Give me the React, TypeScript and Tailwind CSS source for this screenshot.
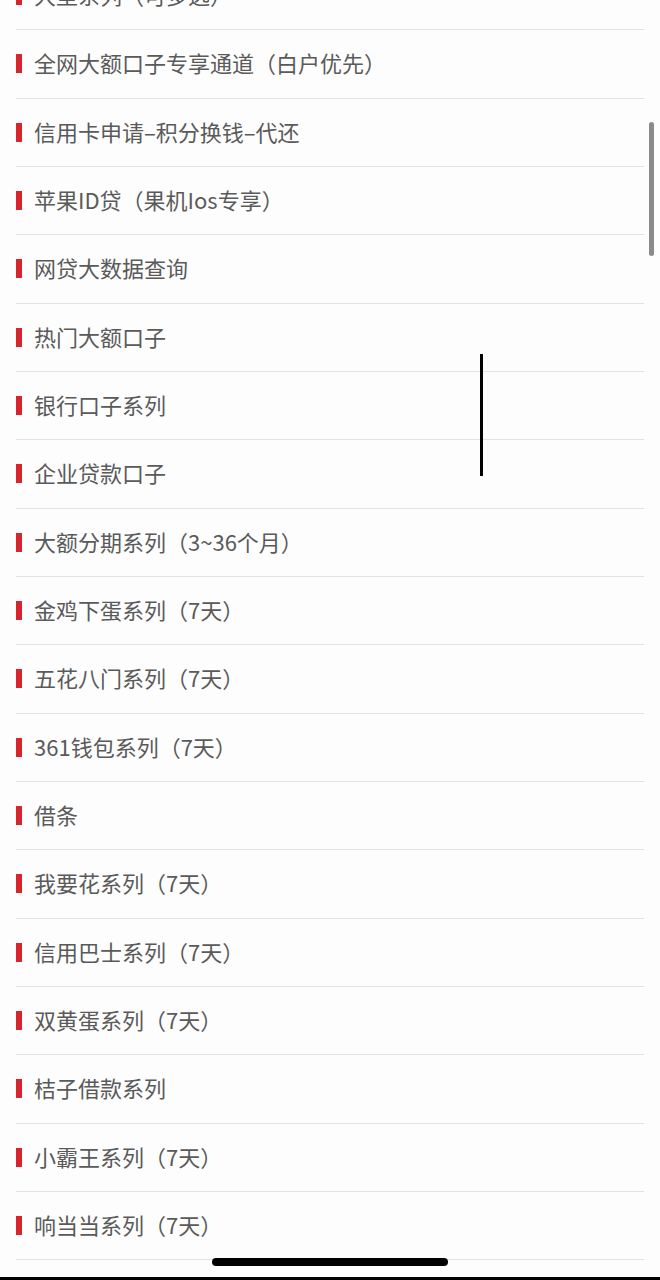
const items = [
  "大型系列（可多选）",
  "全网大额口子专享通道（白户优先）",
  "信用卡申请–积分换钱–代还",
  "苹果ID贷（果机Ios专享）",
  "网贷大数据查询",
  "热门大额口子",
  "银行口子系列",
  "企业贷款口子",
  "大额分期系列（3~36个月）",
  "金鸡下蛋系列（7天）",
  "五花八门系列（7天）",
  "361钱包系列（7天）",
  "借条",
  "我要花系列（7天）",
  "信用巴士系列（7天）",
  "双黄蛋系列（7天）",
  "桔子借款系列",
  "小霸王系列（7天）",
  "响当当系列（7天）",
];

export default function App() {
  return (
    <div
      className="relative h-[1280px] w-[660px] overflow-hidden bg-[#fdfdfd]"
      style={{ fontFamily: '"Noto Sans CJK SC", "Noto Sans", sans-serif' }}
    >
      <div className="mt-[-38px] px-4">
        {items.map((label) => (
          <div
            key={label}
            className="box-border flex h-[68.33px] items-center border-b border-[#e3e3e3]"
          >
            <span className="h-[19px] w-[6px] shrink-0 bg-[#d7252d]" />
            <span className="ml-3 mb-[3px] text-[22px] leading-none text-[#5a5a5a]">{label}</span>
          </div>
        ))}
      </div>

      {/* scroll indicator */}
      <div className="absolute left-[649px] top-[122px] h-[134px] w-[5px] rounded-full bg-[#8a8a8a]" />

      {/* cursor line */}
      <div className="absolute left-[480px] top-[354px] h-[122px] w-[3px] bg-black" />

      {/* home indicator */}
      <div className="absolute left-[212px] top-[1258px] h-[8px] w-[236px] rounded-full bg-black" />
      <div className="absolute bottom-0 left-0 h-[3px] w-full bg-black" />
    </div>
  );
}
